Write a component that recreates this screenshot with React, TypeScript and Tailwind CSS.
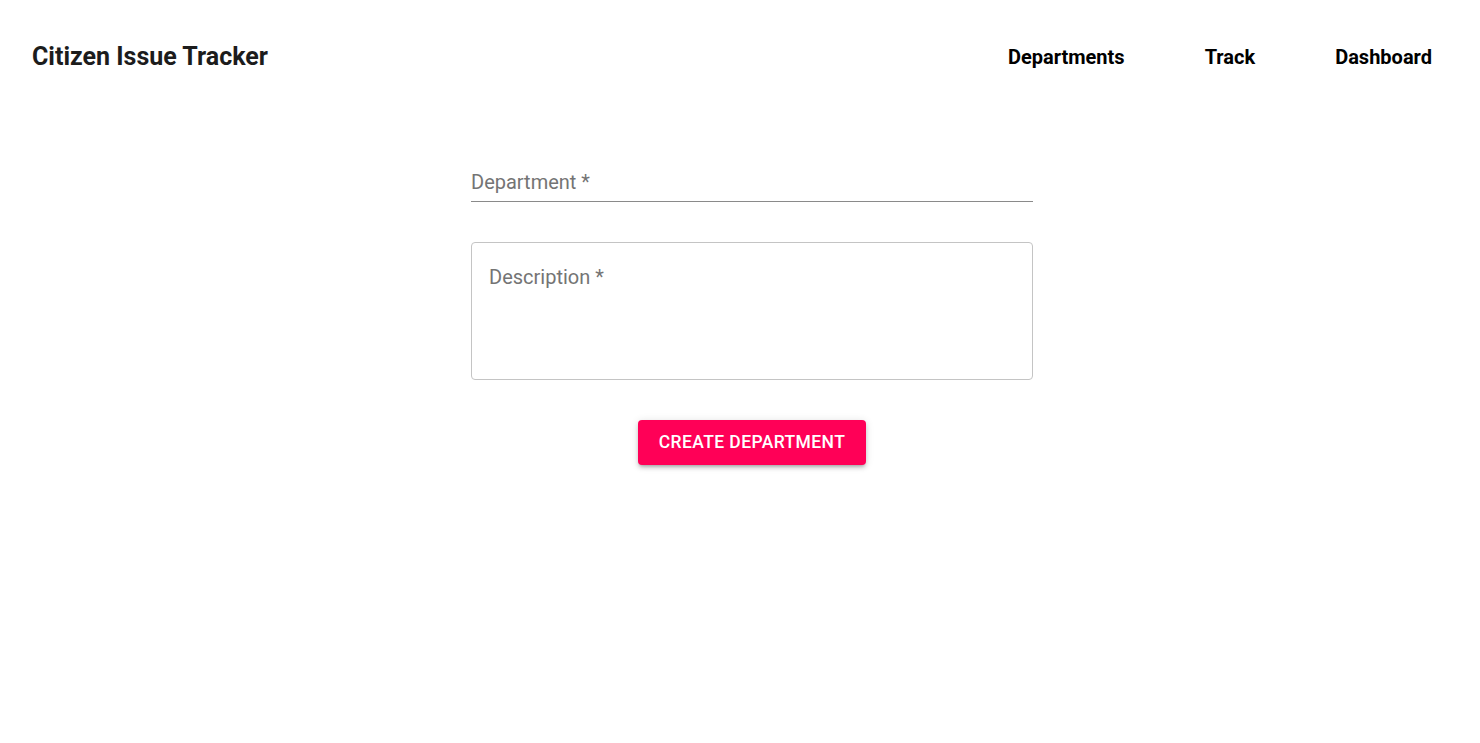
import React from 'react';

const navLinks = ['Departments', 'Track', 'Dashboard'];

export default function App() {
  return (
    <div className="min-h-screen bg-white font-['Roboto',sans-serif]">
      {/* Top bar */}
      <header className="flex items-center justify-between h-[114px] pl-8 pr-12">
        <h1 className="text-[25px] font-bold text-[#1c1c1c]">Citizen Issue Tracker</h1>
        <nav className="flex items-center gap-[80px]">
          {navLinks.map((l) => (
            <a key={l} href="#" className="text-[20px] font-bold text-black">
              {l}
            </a>
          ))}
        </nav>
      </header>

      {/* Form */}
      <div className="flex justify-center pl-6 pt-[53px]">
        <form className="w-[562px] flex flex-col">
          <div className="border-b border-[#8a8a8a] pb-[4px]">
            <label className="text-[20px] text-[#747474]">Department *</label>
          </div>

          <div className="mt-10 h-[138px] rounded border border-[#c4c4c4] px-[17px] pt-[19px]">
            <label className="text-[20px] text-[#747474]">Description *</label>
          </div>

          <div className="flex justify-center mt-10">
            <button
              type="button"
              className="h-[45px] px-[21px] rounded bg-[#ff0057] text-white text-[17.5px] font-medium uppercase tracking-[0.4px] shadow-[0_3px_3px_-2px_rgba(0,0,0,0.2),0_3px_4px_0_rgba(0,0,0,0.14),0_1px_8px_0_rgba(0,0,0,0.12)]"
            >
              Create Department
            </button>
          </div>
        </form>
      </div>
    </div>
  );
}
